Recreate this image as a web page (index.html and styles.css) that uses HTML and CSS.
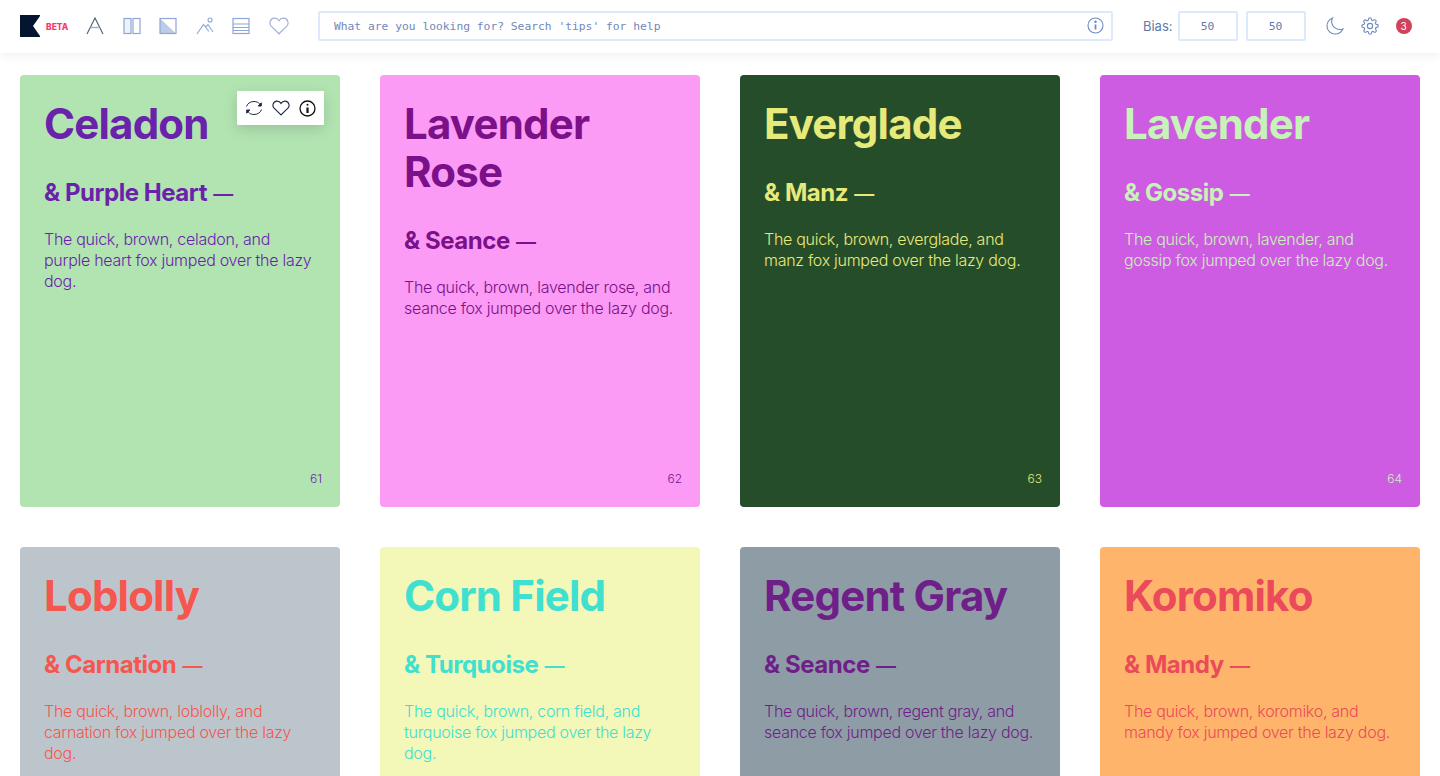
FILE: index.html
```html
<!DOCTYPE html>
<html lang="en">
<head>
  <meta charset="UTF-8">
  <meta name="viewport" content="width=device-width, initial-scale=1.0">
  <title>Colour pairs</title>
  <link rel="stylesheet" href="styles.css">
</head>
<body>
  <header class="topbar">
    <div class="brand">
      <svg class="logo" width="20" height="22" viewBox="0 0 20 22"><path d="M0 0H20V1L13 11L20 21V22H0Z" fill="#04152f"/></svg>
      <span class="beta">BETA</span>
    </div>
    <nav class="tools">
      <svg width="18" height="18" viewBox="0 0 18 18" fill="none" stroke="#4b5a75" stroke-width="1.100"><path d="M1 17L9 1L17 17"/><path d="M4.500 10.500H13.500" stroke="#9fb2d6" stroke-width="1.500"/></svg>
      <svg width="18" height="18" viewBox="0 0 18 18" fill="none" stroke="#8ea6d6" stroke-width="1.200"><rect x="1" y="1.500" width="7" height="15" fill="#eef2fa"/><rect x="10" y="1.500" width="7" height="15"/></svg>
      <svg width="18" height="18" viewBox="0 0 18 18" fill="none" stroke="#8ea6d6" stroke-width="1.200"><path d="M1 1.500L17 16.500H1Z" fill="#bccbe6" stroke="none"/><rect x="1" y="1.500" width="16" height="15"/></svg>
      <svg width="18" height="18" viewBox="0 0 18 18" fill="none" stroke="#8ea6d6" stroke-width="1.100"><path d="M1 17L7.500 7.500L13 14.500M9.500 10L12 7.500L17 15"/><circle cx="14" cy="3" r="2"/></svg>
      <svg width="18" height="18" viewBox="0 0 18 18" fill="none" stroke="#8ea6d6" stroke-width="1.200"><rect x="1" y="1.500" width="16" height="15"/><path d="M1 7H17M1 10.500H17M1 13.500H17"/></svg>
      <svg width="20" height="18" viewBox="0 0 20 18" fill="none" stroke="#9fb2d6" stroke-width="1.200"><path d="M10 16.800L2.200 9.200C-.2 6.600 1 1.500 5.300 1.200C7.400 1.100 9 2.200 10 3.800C11 2.200 12.600 1.100 14.700 1.200C19 1.500 20.200 6.600 17.800 9.200Z"/></svg>
    </nav>
    <div class="search">
      <input class="search-input" type="text" placeholder="What are you looking for? Search 'tips' for help">
      <svg class="search-info" width="17" height="17" viewBox="0 0 17 17" fill="none" stroke="#6f8bbd" stroke-width="1.100"><circle cx="8.500" cy="8.500" r="7.500"/><path d="M8.500 7.500V12.500" stroke-width="1.800"/><circle cx="8.500" cy="4.800" r="0.700" fill="#6f8bbd"/></svg>
    </div>
    <label class="bias">Bias:</label>
    <input class="bias-input" type="text" value="50">
    <input class="bias-input" type="text" value="50">
    <svg class="moon" width="18" height="18" viewBox="0 0 18 18" fill="none" stroke="#6f8bbd" stroke-width="1.100"><path d="M6.500 1C3 2.500 1 5.500 1 9C1 13.400 4.600 17 9 17C12.500 17 15.500 15 17 12C12 13.800 6.500 10.500 5.800 6C5.500 4.300 5.800 2.500 6.500 1Z"/></svg>
    <svg class="gear" width="18" height="18" viewBox="0 0 24 24" fill="none" stroke="#6f8bbd" stroke-width="1.500"><circle cx="12" cy="12" r="3.500"/><path d="M19.400 15a1.650 1.650 0 0 0 .33 1.820l.06.06a2 2 0 1 1-2.830 2.830l-.06-.06a1.650 1.650 0 0 0-2.800 1.170V21a2 2 0 1 1-4 0v-.09a1.650 1.650 0 0 0-2.800-1.170l-.06.06a2 2 0 1 1-2.830-2.830l.06-.06a1.650 1.650 0 0 0-1.170-2.800H3a2 2 0 1 1 0-4h.09a1.650 1.650 0 0 0 1.170-2.800l-.06-.06a2 2 0 1 1 2.830-2.830l.06.06a1.650 1.650 0 0 0 2.800-1.170V3a2 2 0 1 1 4 0v.09a1.650 1.650 0 0 0 2.800 1.170l.06-.06a2 2 0 1 1 2.830 2.830l-.06.06a1.650 1.650 0 0 0 1.170 2.800H21a2 2 0 1 1 0 4h-.09a1.650 1.650 0 0 0-1.510 1z"/></svg>
    <span class="badge">3</span>
  </header>

  <main class="grid">
    <article class="card celadon">
      <div class="card-tools">
        <svg width="18" height="18" viewBox="0 0 18 18" fill="none" stroke="#1c2b45" stroke-width="1"><path d="M1.500 7.500C2.500 4.300 5.500 2.500 9 2.500C11.500 2.500 13.500 3.500 14.800 5"/><path d="M16.500 10.500C15.500 13.700 12.500 15.500 9 15.500C6.500 15.500 4.500 14.500 3.200 13"/><path d="M16.300 3.800V7H13.200Z" fill="#1c2b45"/><path d="M1.700 14.200V11H4.800Z" fill="#1c2b45"/></svg>
        <svg width="18" height="16" viewBox="0 0 20 18" fill="none" stroke="#1c2b45" stroke-width="1.300"><path d="M10 16.800L2.200 9.200C-.2 6.600 1 1.500 5.300 1.200C7.400 1.100 9 2.200 10 3.800C11 2.200 12.600 1.100 14.700 1.200C19 1.500 20.200 6.600 17.800 9.200Z"/></svg>
        <svg width="17" height="17" viewBox="0 0 17 17" fill="none" stroke="#111" stroke-width="1.300"><circle cx="8.500" cy="8.500" r="7.500"/><path d="M8.500 7.500V13" stroke-width="2.200"/><circle cx="8.500" cy="4.700" r="1" fill="#111" stroke="none"/></svg>
      </div>
      <h1>Celadon</h1>
      <h2>&amp; Purple Heart <span class="dash">—</span></h2>
      <p>The quick, brown, celadon, and purple heart fox jumped over the lazy dog.</p>
      <span class="num">61</span>
    </article>
    <article class="card lavender-rose">
      <h1>Lavender Rose</h1>
      <h2>&amp; Seance <span class="dash">—</span></h2>
      <p>The quick, brown, lavender rose, and seance fox jumped over the lazy dog.</p>
      <span class="num">62</span>
    </article>
    <article class="card everglade">
      <h1>Everglade</h1>
      <h2>&amp; Manz <span class="dash">—</span></h2>
      <p>The quick, brown, everglade, and manz fox jumped over the lazy dog.</p>
      <span class="num">63</span>
    </article>
    <article class="card lavender">
      <h1>Lavender</h1>
      <h2>&amp; Gossip <span class="dash">—</span></h2>
      <p>The quick, brown, lavender, and gossip fox jumped over the lazy dog.</p>
      <span class="num">64</span>
    </article>
    <article class="card loblolly">
      <h1>Loblolly</h1>
      <h2>&amp; Carnation <span class="dash">—</span></h2>
      <p>The quick, brown, loblolly, and carnation fox jumped over the lazy dog.</p>
    </article>
    <article class="card corn-field">
      <h1>Corn Field</h1>
      <h2>&amp; Turquoise <span class="dash">—</span></h2>
      <p>The quick, brown, corn field, and turquoise fox jumped over the lazy dog.</p>
    </article>
    <article class="card regent-gray">
      <h1>Regent Gray</h1>
      <h2>&amp; Seance <span class="dash">—</span></h2>
      <p>The quick, brown, regent gray, and seance fox jumped over the lazy dog.</p>
    </article>
    <article class="card koromiko">
      <h1>Koromiko</h1>
      <h2>&amp; Mandy <span class="dash">—</span></h2>
      <p>The quick, brown, koromiko, and mandy fox jumped over the lazy dog.</p>
    </article>
  </main>
</body>
</html>
```

FILE: styles.css
```css
* {
  margin: 0;
  padding: 0;
  box-sizing: border-box;
}
body {
  font-family: Inter, 'Liberation Sans', sans-serif;
  background-color: #fff;
  height: 100vh;
  overflow: hidden;
}
.topbar {
  display: flex;
  align-items: center;
  height: 53px;
  padding: 0 20px 1px;
  background-color: #fff;
  box-shadow: 0 2px 10px rgba(30,50,80,0.08);
  position: relative;
  z-index: 2;
}
.brand {
  display: flex;
  align-items: center;
  width: 66px;
}
.beta {
  margin: 2px 0 0 6px;
  font-size: 8.500px;
  font-weight: 800;
  color: #f8386f;
}
.tools {
  display: flex;
  align-items: center;
  gap: 18.600px;
}
.search {
  position: relative;
  margin-left: 29px;
  width: 795px;
}
.search-input {
  display: block;
  width: 100%;
  height: 30px;
  padding: 0 40px 0 14px;
  border: 2px solid #dde9fd;
  border-radius: 2px;
  font-family: 'DejaVu Sans Mono', monospace;
  font-size: 11.300px;
  color: #7088b8;
}
.search-input::placeholder {
  color: #7088b8;
  opacity: 1;
}
.search-info {
  position: absolute;
  top: 6px;
  right: 9px;
}
.bias {
  margin-left: 30px;
  font-size: 13px;
  color: #5f7aab;
}
.bias-input {
  width: 60px;
  height: 30px;
  margin-left: 5px;
  border: 2px solid #dde9fd;
  border-radius: 2px;
  text-align: center;
  font-family: 'DejaVu Sans Mono', monospace;
  font-size: 11.300px;
  color: #5f7aab;
}
.bias-input + .bias-input {
  margin-left: 8px;
}
.moon {
  margin-left: 20px;
}
.gear {
  margin-left: 17px;
}
.badge {
  display: flex;
  align-items: center;
  justify-content: center;
  width: 16px;
  height: 16px;
  margin-left: 17px;
  border-radius: 50%;
  background-color: #d0425a;
  color: #fff;
  font-size: 10px;
}
.grid {
  display: grid;
  grid-template-columns: repeat(4, 320px);
  gap: 40px;
  padding: 22px 20px;
}
.card {
  position: relative;
  height: 432px;
  padding: 25px 24px;
  border-radius: 4px;
}
.card h1 {
  font-size: 42px;
  line-height: 48px;
  font-weight: 700;
  letter-spacing: -0.800px;
}
.card h2 {
  margin-top: 29px;
  font-size: 24px;
  line-height: 32px;
  font-weight: 700;
  letter-spacing: -0.450px;
}
.dash {
  margin-left: 1px;
  font-size: 20px;
  font-weight: 500;
}
.card p {
  margin-top: 19px;
  font-size: 16px;
  line-height: 21px;
  font-weight: 300;
  letter-spacing: -0.280px;
}
.num {
  position: absolute;
  right: 18px;
  bottom: 21px;
  font-size: 12px;
  font-weight: 300;
}
.card-tools {
  position: absolute;
  top: 16px;
  right: 16px;
  display: flex;
  align-items: center;
  justify-content: space-between;
  width: 87px;
  height: 34px;
  padding: 0 8px;
  background-color: #fff;
  border-radius: 1px;
  box-shadow: 0 4px 14px rgba(0,0,0,0.15);
}
.celadon { background-color: #b2e4b2; color: #6a22ab; }
.lavender-rose { background-color: #fb9bf6; color: #7a1188; }
.everglade { background-color: #264d2a; color: #e6ea7a; }
.lavender { background-color: #ce5ce2; color: #c7f2b8; }
.loblolly { background-color: #bdc5cc; color: #f5564e; }
.corn-field { background-color: #f3f7b8; color: #40e0d0; }
.regent-gray { background-color: #8e9ca6; color: #6f1f88; }
.koromiko { background-color: #feb56b; color: #ea4a5a; }
```
